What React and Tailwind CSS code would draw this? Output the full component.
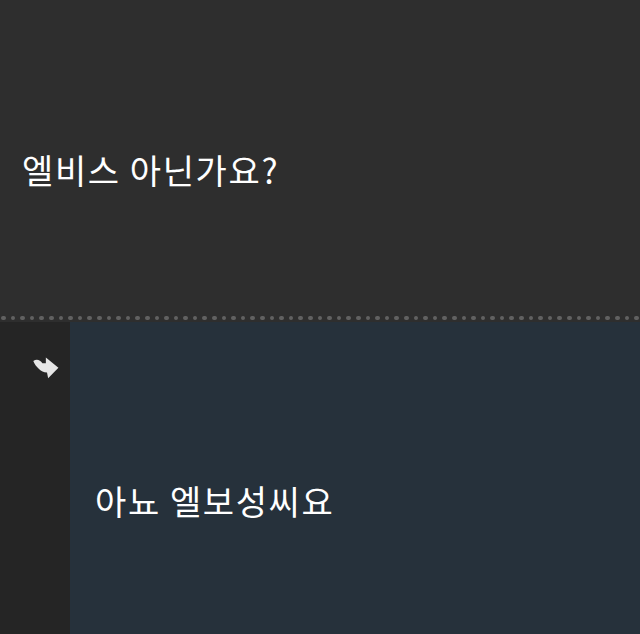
export default function App() {
  const font = { fontFamily: '"Noto Sans CJK KR", "Noto Sans", sans-serif' };
  return (
    <div className="w-[640px] h-[634px] flex flex-col overflow-hidden bg-[#2e2e2e]" style={font}>
      <div className="h-[314px] shrink-0 bg-[#2e2e2e] pl-[22px] pt-[146px]">
        <p className="text-[34px] leading-[48px] tracking-[1.6px] text-white">엘비스 아닌가요?</p>
      </div>
      <div className="h-[8px] shrink-0 flex items-center gap-[5px] pl-[1px] bg-[#2e2e2e] overflow-hidden">
        {Array.from({ length: 70 }).map((_, i) => (
          <span key={i} className="w-[4.6px] h-[4.6px] shrink-0 rounded-full bg-[#616161]" />
        ))}
      </div>
      <div className="flex flex-1">
        <div className="w-[70px] shrink-0 bg-[#252525] pt-[34px] pl-[31px]">
          <svg width="32" height="26" viewBox="0 0 28 22" className="blur-[0.7px]">
            <path
              d="M2 4 C5 2 8 3 10 6 L13 6 L13 1 L24 10 L15 19 L14 14 C11 14 9 13 7 11 C5 9 3 7 2 4 Z"
              fill="#e6e6e6"
            />
          </svg>
        </div>
        <div className="flex-1 bg-[#26313b] pl-[25px] pt-[155px]">
          <p className="text-[34px] leading-[48px] tracking-[1.6px] text-white">아뇨 엘보성씨요</p>
        </div>
      </div>
    </div>
  );
}
